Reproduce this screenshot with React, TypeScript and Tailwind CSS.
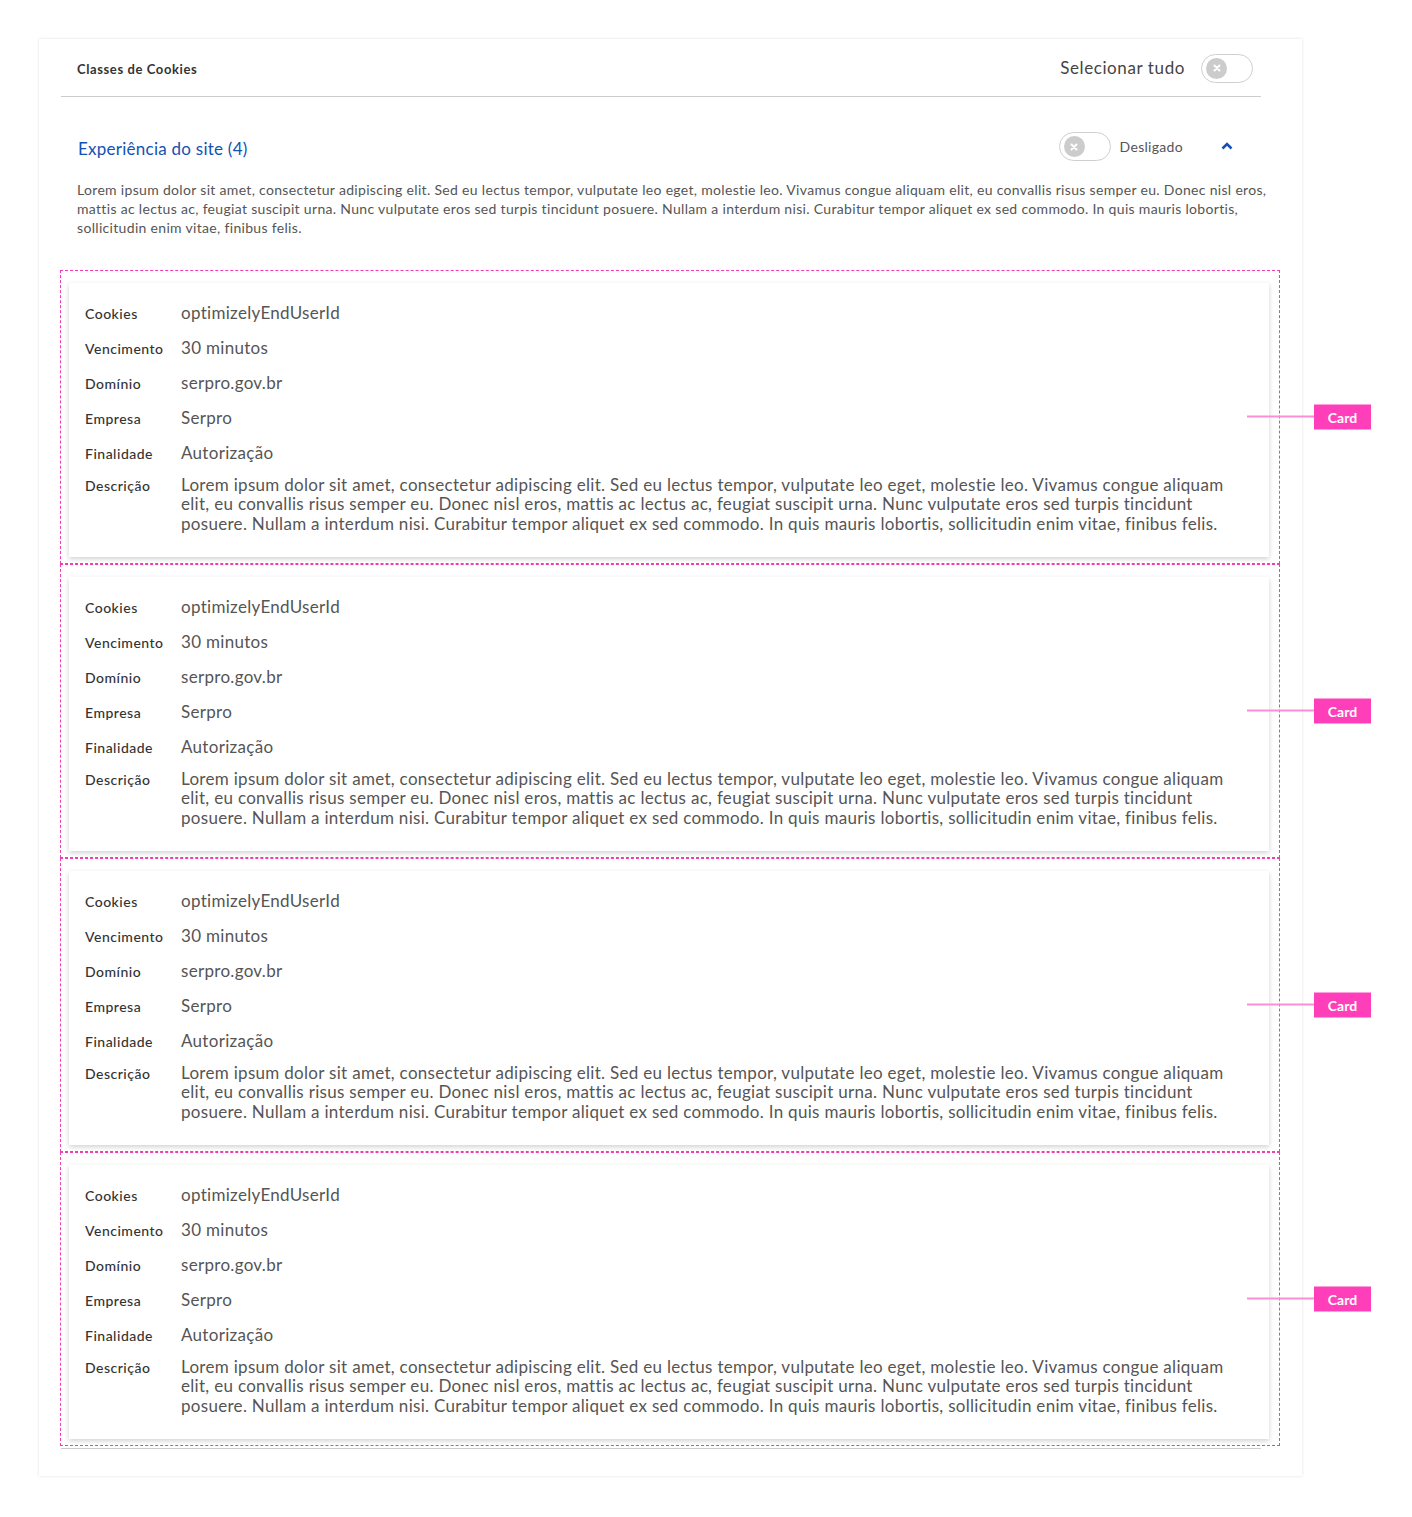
import React from 'react'

const lorem =
  'Lorem ipsum dolor sit amet, consectetur adipiscing elit. Sed eu lectus tempor, vulputate leo eget, molestie leo. Vivamus congue aliquam elit, eu convallis risus semper eu. Donec nisl eros, mattis ac lectus ac, feugiat suscipit urna. Nunc vulputate eros sed turpis tincidunt posuere. Nullam a interdum nisi. Curabitur tempor aliquet ex sed commodo. In quis mauris lobortis, sollicitudin enim vitae, finibus felis.'

const rows = [
  { label: 'Cookies', value: 'optimizelyEndUserId' },
  { label: 'Vencimento', value: '30 minutos' },
  { label: 'Domínio', value: 'serpro.gov.br' },
  { label: 'Empresa', value: 'Serpro' },
  { label: 'Finalidade', value: 'Autorização' },
]

function Switch() {
  return (
    <div className="w-[52px] h-[29px] rounded-full border border-[#cfcfcf] bg-white flex items-center pl-[4px]">
      <div className="w-[21px] h-[21px] rounded-full bg-[#cccccc] flex items-center justify-center">
        <svg width="8" height="8" viewBox="0 0 8 8">
          <path d="M1.5 1.5 L6.5 6.5 M6.5 1.5 L1.5 6.5" stroke="white" strokeWidth="2" strokeLinecap="round" />
        </svg>
      </div>
    </div>
  )
}

function CookieCard() {
  return (
    <div className="relative border border-dashed border-[#f23cb4] pt-[12px] pb-[6px] pl-[8px] pr-[10px]">
      <div className="bg-white shadow-[0_2px_5px_rgba(0,0,0,0.18)] h-[274px] px-[16px] pt-[17px]">
        {rows.map((row) => (
          <div key={row.label} className="flex items-baseline h-[35px]">
            <span className="w-[96px] shrink-0 text-[14px] font-medium tracking-[0.5px] text-[#333]">{row.label}</span>
            <span className="text-[17px] tracking-[0.3px] text-[#555]">{row.value}</span>
          </div>
        ))}
        <div className="flex items-baseline">
          <span className="w-[96px] shrink-0 text-[14px] font-medium tracking-[0.5px] text-[#333]">Descrição</span>
          <p className="text-[17px] leading-[19.5px] tracking-[0.3px] text-[#555]">{lorem}</p>
        </div>
      </div>
      {/* anotação */}
      <div className="absolute left-[1186px] top-1/2 -translate-y-1/2 flex items-center">
        <div className="w-[67px] h-[2px] bg-[#fb8fd3]" />
        <div className="w-[57px] h-[25px] bg-[#ff3fb9] text-white text-[14px] font-bold flex items-center justify-center">
          Card
        </div>
      </div>
    </div>
  )
}

export default function App() {
  return (
    <div className="min-h-[1517px] bg-white pt-[39px] pl-[39px]" style={{ fontFamily: 'Lato, "Open Sans", sans-serif' }}>
      <div className="w-[1263px] bg-white shadow-[0_0_3px_rgba(0,0,0,0.12)] pt-[1px] px-[22px] pb-[27px]">
        {/* cabeçalho */}
        <div className="flex items-center justify-between w-[1200px] h-[57px] border-b border-[#cccccc] pl-[16px] pr-[8px]">
          <span className="text-[13px] font-bold tracking-[0.6px] text-[#333] mt-[3px]">Classes de Cookies</span>
          <div className="flex items-center gap-[16px]">
            <span className="text-[17px] tracking-[0.6px] text-[#444]">Selecionar tudo</span>
            <Switch />
          </div>
        </div>

        {/* Experiência do site */}
        <div className="flex items-center justify-between w-[1200px] pl-[17px] pr-[28px] mt-[35px]">
          <span className="text-[17px] tracking-[0.25px] text-[#1351b4] mt-[4px]">Experiência do site (4)</span>
          <div className="flex items-center">
            <Switch />
            <span className="ml-[9px] text-[14px] tracking-[0.3px] text-[#555]">Desligado</span>
            <svg className="ml-[38px] -mt-[2px]" width="12" height="8" viewBox="0 0 12 8">
              <path d="M1.5 6.5 L6 2 L10.5 6.5" stroke="#1351b4" strokeWidth="2.5" fill="none" />
            </svg>
          </div>
        </div>
        <p className="pl-[16px] mt-[18px] text-[14px] leading-[19px] tracking-[0.32px] text-[#555]">{lorem}</p>

        {/* cards */}
        <div className="mt-[33px] w-[1220px] -ml-[1px]">
          <CookieCard />
          <CookieCard />
          <CookieCard />
          <CookieCard />
        </div>
        <div className="w-[1200px] border-b border-[#cccccc] mt-[2px]" />
      </div>
    </div>
  )
}
